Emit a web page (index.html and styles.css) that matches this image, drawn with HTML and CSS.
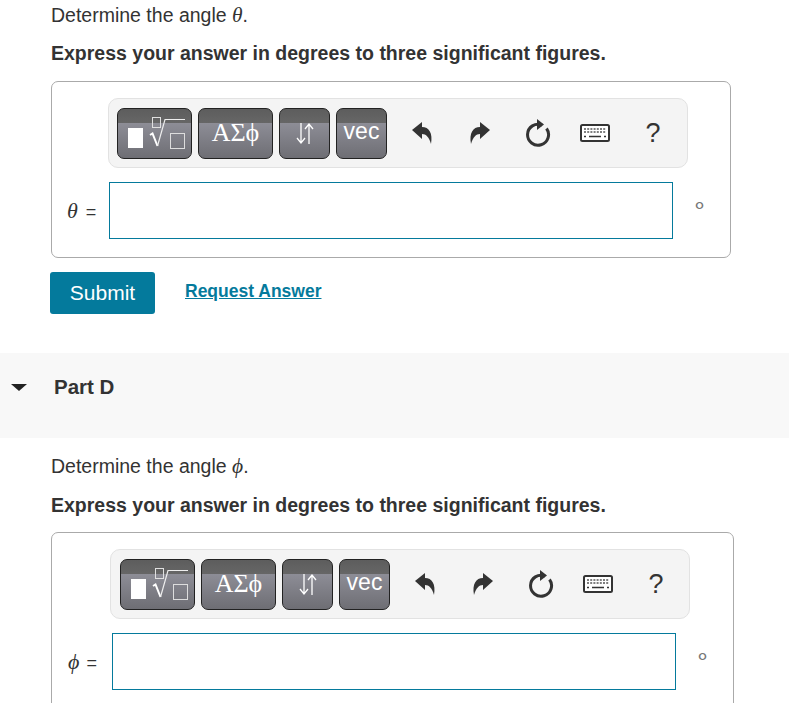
FILE: index.html
```html
<!DOCTYPE html>
<html lang="en">
<head>
    <meta charset="UTF-8">
    <title>Part C and Part D</title>
    <link rel="stylesheet" href="styles.css">
</head>
<body>
    <div class="page">
        <div class="part part-c">
            <p class="question">Determine the angle <i class="math">θ</i>.</p>
            <p class="instruction">Express your answer in degrees to three significant figures.</p>
            <div class="answer-box">
                <div class="toolbar">
                    <button class="tool tool-wide">
                        <svg width="73" height="49" viewBox="0 0 73 49"><use href="#templates"/></svg>
                    </button>
                    <button class="tool tool-wide symbols">ΑΣϕ</button>
                    <button class="tool tool-arrows">
                        <svg width="24" height="24" viewBox="0 0 24 24"><use href="#arrows"/></svg>
                    </button>
                    <button class="tool tool-vec">vec</button>
                    <span class="action action-undo"><svg width="22" height="24" viewBox="0 0 22 24"><use href="#undo"/></svg></span>
                    <span class="action action-redo"><svg width="22" height="24" viewBox="0 0 22 24"><use href="#redo"/></svg></span>
                    <span class="action action-reset"><svg width="26" height="28" viewBox="0 0 26 28"><use href="#reset"/></svg></span>
                    <span class="action action-keys"><svg width="30" height="18" viewBox="0 0 30 18"><use href="#keys"/></svg></span>
                    <span class="action action-help">?</span>
                </div>
                <div class="answer-row">
                    <label class="answer-label"><i class="math">θ</i> =</label>
                    <input class="answer-input" type="text">
                    <span class="unit">∘</span>
                </div>
            </div>
            <div class="actions">
                <button class="submit">Submit</button>
                <a class="request" href="#">Request Answer</a>
            </div>
        </div>

        <div class="part-header">
            <span class="caret"></span>
            <h2>Part D</h2>
        </div>

        <div class="part part-d">
            <p class="question">Determine the angle <i class="math">ϕ</i>.</p>
            <p class="instruction">Express your answer in degrees to three significant figures.</p>
            <div class="answer-box answer-box-d">
                <div class="toolbar">
                    <button class="tool tool-wide">
                        <svg width="73" height="49" viewBox="0 0 73 49"><use href="#templates"/></svg>
                    </button>
                    <button class="tool tool-wide symbols">ΑΣϕ</button>
                    <button class="tool tool-arrows">
                        <svg width="24" height="24" viewBox="0 0 24 24"><use href="#arrows"/></svg>
                    </button>
                    <button class="tool tool-vec">vec</button>
                    <span class="action action-undo"><svg width="22" height="24" viewBox="0 0 22 24"><use href="#undo"/></svg></span>
                    <span class="action action-redo"><svg width="22" height="24" viewBox="0 0 22 24"><use href="#redo"/></svg></span>
                    <span class="action action-reset"><svg width="26" height="28" viewBox="0 0 26 28"><use href="#reset"/></svg></span>
                    <span class="action action-keys"><svg width="30" height="18" viewBox="0 0 30 18"><use href="#keys"/></svg></span>
                    <span class="action action-help">?</span>
                </div>
                <div class="answer-row">
                    <label class="answer-label"><i class="math">ϕ</i> =</label>
                    <input class="answer-input" type="text">
                    <span class="unit">∘</span>
                </div>
            </div>
        </div>
    </div>

    <svg class="sprites" width="0" height="0">
        <symbol id="templates" viewBox="0 0 73 49">
            <rect x="10" y="19" width="15" height="20" fill="#fff"/>
            <rect x="34.5" y="8.5" width="8" height="10" fill="none" stroke="#e0e0e0"/>
            <path d="M32 26 L34.5 24.5 L39.5 37" fill="none" stroke="#fff" stroke-width="2"/>
            <path d="M39.5 37 L47 10.5 H67" fill="none" stroke="#eee" stroke-width="1.2"/>
            <rect x="52.5" y="24.5" width="14" height="15" fill="none" stroke="#ddd"/>
        </symbol>
        <symbol id="arrows" viewBox="0 0 24 24">
            <path d="M8 2 V22 M4 17 L8 22 L12 17 M16 23 V3 M12 8 L16 3 L20 8" fill="none" stroke="#fff" stroke-width="1.3"/>
        </symbol>
        <symbol id="undo" viewBox="0 0 22 24">
            <path d="M1 9 L11 1 V6 C18 6 22 12 20 23 C18 16 15 13 11 13 V18 Z" fill="#333"/>
        </symbol>
        <symbol id="redo" viewBox="0 0 22 24">
            <path d="M21 9 L11 1 V6 C4 6 0 12 2 23 C4 16 7 13 11 13 V18 Z" fill="#333"/>
        </symbol>
        <symbol id="reset" viewBox="0 0 26 28">
            <path d="M17 6 A10.5 10.5 0 1 0 21.5 9.5" fill="none" stroke="#333" stroke-width="3"/>
            <path d="M12 0 L19 5.5 L12 11 Z" fill="#333"/>
        </symbol>
        <symbol id="keys" viewBox="0 0 30 18">
            <rect x="1" y="1" width="28" height="16" rx="1.5" fill="#fff" stroke="#333" stroke-width="2"/>
            <path d="M4 5 H26 M4 8 H26" stroke="#555" stroke-width="1.6" stroke-dasharray="2 1.2" fill="none"/>
            <path d="M4 12.5 H6 M9 12.5 H21 M24 12.5 H26" stroke="#333" stroke-width="1.6" fill="none"/>
        </symbol>
    </svg>
</body>
</html>
```

FILE: styles.css
```css
html, body {
    margin: 0;
    height: 703px;
    overflow: hidden;
    background-color: #fff;
}
body {
    font-family: "Liberation Sans", Arial, sans-serif;
    font-size: 19.5px;
    color: #333;
}
.page {
    width: 789px;
}
.sprites {
    position: absolute;
}
.part {
    padding-left: 51px;
}
.part-c {
    height: 353px;
}
.part-d {
    padding-top: 16px;
}
.question, .instruction {
    margin: 0;
    line-height: 24px;
}
.question {
    margin-bottom: 15px;
}
.part-c .question {
    padding-top: 3px;
    margin-bottom: 14px;
}
.instruction {
    font-weight: bold;
}
.math {
    font-family: "Liberation Serif", serif;
    font-style: italic;
    font-size: 1.1em;
}
.answer-box {
    width: 678px;
    height: 175px;
    margin-top: 16px;
    border: 1px solid #aaa;
    border-radius: 7px;
    box-sizing: content-box;
}
.answer-box-d {
    width: 681px;
    height: 200px;
    margin-top: 15px;
}
.toolbar {
    display: flex;
    align-items: center;
    width: 580px;
    height: 70px;
    margin: 16px 0 14px 56px;
    padding-left: 8px;
    box-sizing: border-box;
    border: 1px solid #e2e2e2;
    border-radius: 10px;
    background-color: #f4f4f4;
    gap: 6px;
}
.answer-box-d .toolbar {
    margin-left: 58px;
    padding-left: 9px;
}
.tool {
    height: 51px;
    padding: 0;
    display: flex;
    align-items: center;
    justify-content: center;
    border: 1px solid #222;
    border-radius: 7px;
    color: #fff;
    background: linear-gradient(#5d5d5d 0, #666 28%, #8d8d96 29%, #6e6e74 100%);
}
.tool-wide {
    width: 75px;
}
.tool-arrows, .tool-vec {
    width: 51px;
}
.tool-vec {
    font-family: "Liberation Sans", sans-serif;
    font-size: 23px;
    padding-bottom: 4px;
}
.symbols {
    font-family: "Liberation Serif", serif;
    font-size: 26px;
}
.action {
    display: flex;
    justify-content: center;
    width: 30px;
    color: #333;
}
.action-undo {
    margin-left: 14px;
}
.action-redo {
    margin-left: 22px;
}
.action-reset {
    margin-left: 22px;
}
.action-keys {
    margin-left: 21px;
}
.action-help {
    margin-left: 22px;
    font-size: 27px;
}
.answer-row {
    display: flex;
    align-items: center;
}
.answer-label {
    width: 42px;
    margin-left: 15px;
    font-size: 18px;
    white-space: nowrap;
}
.answer-label .math {
    margin-right: 3px;
    font-size: 22px;
}
.answer-box-d .answer-label {
    width: 44px;
    margin-left: 16px;
}
.answer-box-d .answer-label .math {
    margin-right: 2px;
}
.answer-input {
    width: 564px;
    height: 57px;
    padding: 0;
    box-sizing: border-box;
    border: 1px solid #047a9c;
    background-color: #fff;
}
.unit {
    margin: 0 0 12px 19px;
    font-size: 24px;
    color: #777;
}
.actions {
    display: flex;
    align-items: center;
    margin: 14px 0 0 -1px;
}
.submit {
    width: 105px;
    height: 42px;
    padding: 0;
    border: none;
    border-radius: 3px;
    font-family: inherit;
    font-size: 21px;
    color: #fff;
    background-color: #047a9c;
}
.request {
    margin-left: 30px;
    margin-bottom: 3px;
    font-size: 17.5px;
    font-weight: bold;
    color: #047a9c;
}
.part-header {
    display: flex;
    align-items: center;
    height: 85px;
    padding-bottom: 18px;
    box-sizing: border-box;
    background-color: #f8f8f8;
}
.caret {
    width: 0;
    height: 0;
    margin: 2px 0 0 11px;
    border-style: solid;
    border-width: 7px 8px 0;
    border-color: #222 transparent transparent;
}
.part-header h2 {
    margin: 0 0 0 27px;
    font-size: 20.5px;
}
```
